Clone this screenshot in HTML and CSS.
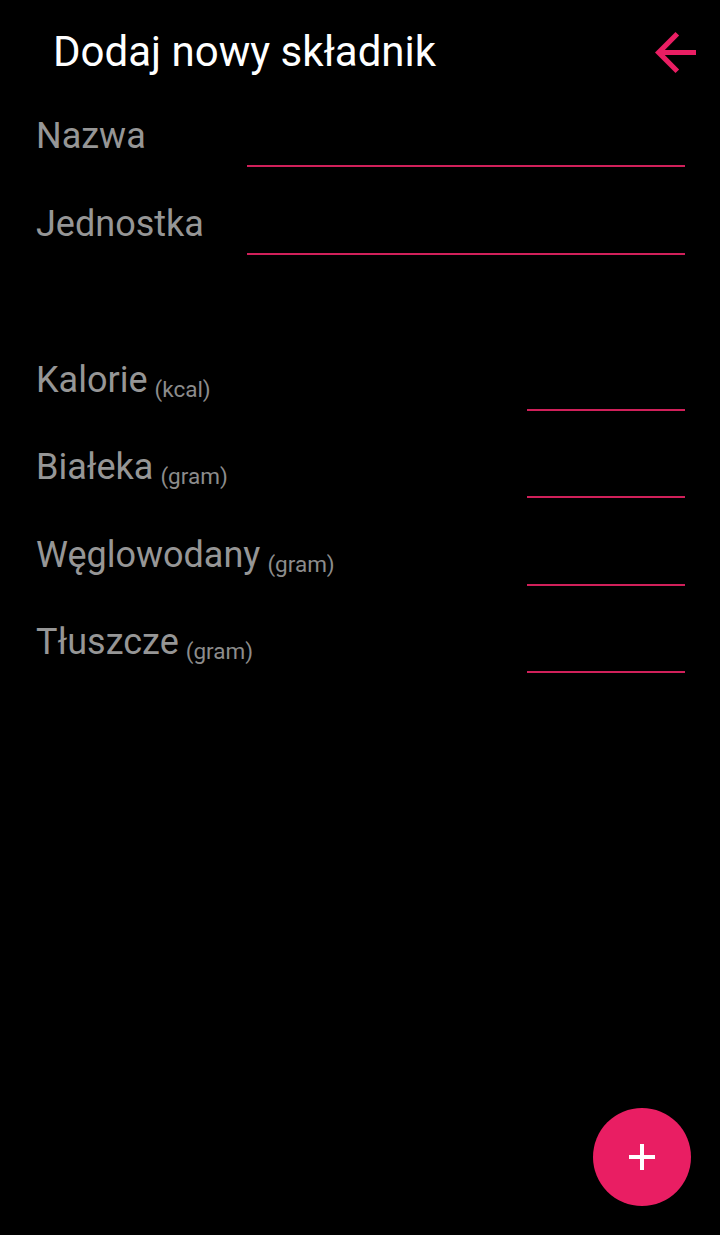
FILE: index.html
```html
<!DOCTYPE html>
<html lang="pl">
<head>
<meta charset="utf-8">
<title>Dodaj nowy składnik</title>
<link rel="stylesheet" href="styles.css">
</head>
<body>
<div class="screen">
  <header class="header">
    <h1 class="title">Dodaj nowy składnik</h1>
    <button class="back" aria-label="Wstecz">
      <svg viewBox="4 4 16 16" width="41" height="41"><path d="M20 11H7.83l5.59-5.59L12 4l-8 8 8 8 1.41-1.41L7.83 13H20v-2z" fill="#e91e63"/></svg>
    </button>
  </header>
  <form class="form">
    <div class="row">
      <label class="label">Nazwa</label>
      <div class="field wide"></div>
    </div>
    <div class="row">
      <label class="label">Jednostka</label>
      <div class="field wide"></div>
    </div>
    <div class="spacer"></div>
    <div class="row nut">
      <label class="label">Kalorie<span class="unit">(kcal)</span></label>
      <div class="field narrow"></div>
    </div>
    <div class="row nut">
      <label class="label">Białeka<span class="unit">(gram)</span></label>
      <div class="field narrow"></div>
    </div>
    <div class="row nut">
      <label class="label">Węglowodany<span class="unit">(gram)</span></label>
      <div class="field narrow"></div>
    </div>
    <div class="row nut">
      <label class="label">Tłuszcze<span class="unit">(gram)</span></label>
      <div class="field narrow"></div>
    </div>
  </form>
  <button class="fab" aria-label="Dodaj">
    <svg viewBox="0 0 26 26" width="26" height="26"><path d="M11 0h4v11h11v4H15v11h-4V15H0v-4h11z" fill="#fff"/></svg>
  </button>
</div>
</body>
</html>
```
FILE: styles.css
```css
html, body {
  margin: 0;
  padding: 0;
  background: #000;
}
body {
  font-family: Roboto, "Noto Sans", sans-serif;
  width: 720px;
  height: 1235px;
  overflow: hidden;
}
.screen {
  position: relative;
  height: 1235px;
}
.header {
  display: flex;
  justify-content: space-between;
  align-items: center;
  height: 79px;
  box-sizing: border-box;
  padding: 28px 24px 3px 53px;
}
.title {
  margin: 0;
  font-size: 42px;
  line-height: 48px;
  font-weight: 400;
  color: #fff;
}
.back {
  display: block;
  padding: 0;
  border: 0;
  background: none;
  width: 41px;
  height: 41px;
}
.back svg { display: block; }
.form {
  margin: 0;
  padding: 0 35px 0 36px;
}
.row {
  display: flex;
  justify-content: space-between;
  align-items: flex-end;
  height: 88px;
}
.row.nut { height: 87.5px; }
.label {
  font-size: 36px;
  line-height: 40px;
  color: #969696;
  margin-bottom: 11px;
  white-space: nowrap;
}
.unit {
  font-size: 22.5px;
  line-height: 0;
  color: #8c8c8c;
  margin-left: 7px;
  vertical-align: -5px;
}
.field {
  height: 40px;
  border-bottom: 2px solid #d0205a;
}
.field.wide { width: 438px; }
.field.narrow { width: 158px; }
.spacer { height: 68px; }
.fab {
  position: absolute;
  right: 29px;
  bottom: 29px;
  width: 98px;
  height: 98px;
  border-radius: 50%;
  border: 0;
  padding: 0;
  background: #e91e63;
  display: flex;
  align-items: center;
  justify-content: center;
}
.fab svg { display: block; }
```
